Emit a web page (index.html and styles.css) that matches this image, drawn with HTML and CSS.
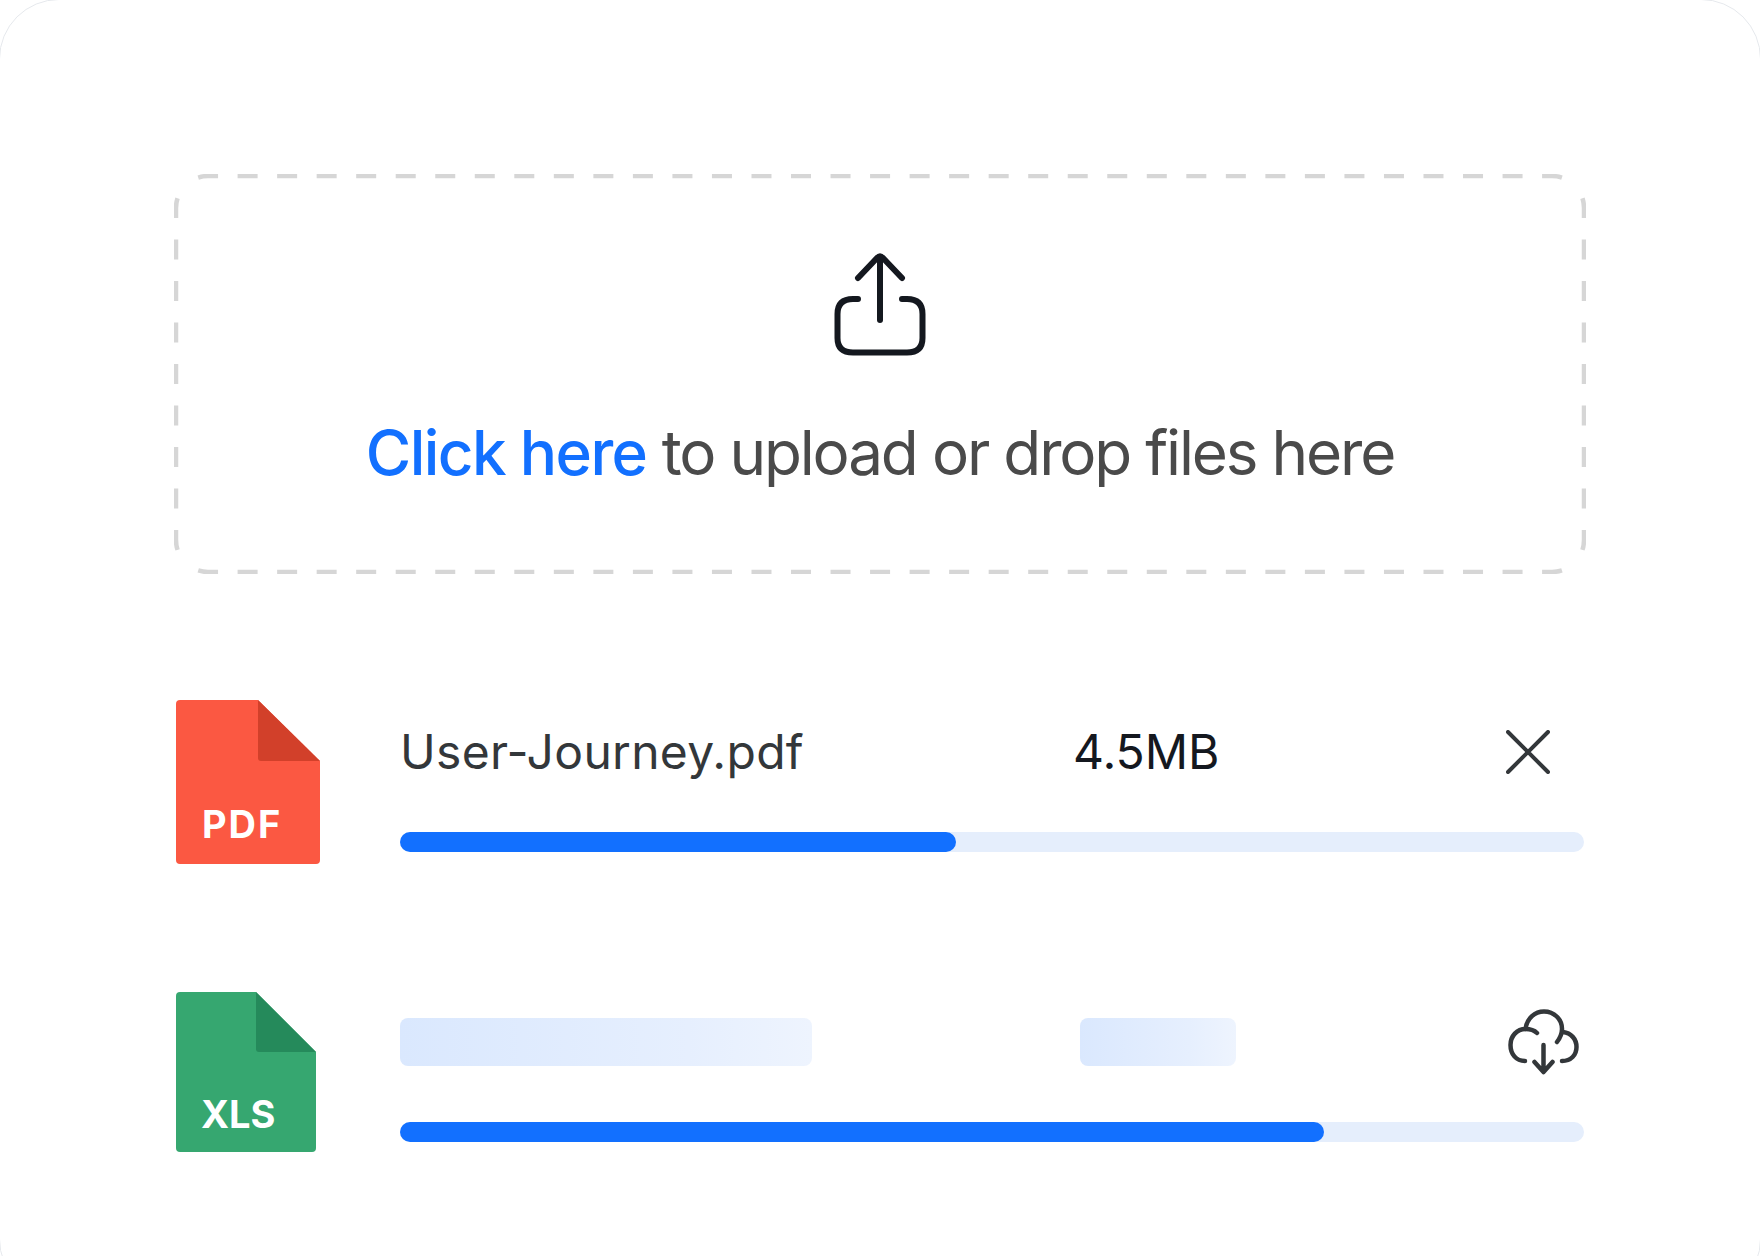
FILE: index.html
```html
<!DOCTYPE html>
<html lang="en">
<head>
    <meta charset="UTF-8">
    <meta name="viewport" content="width=device-width, initial-scale=1.0">
    <title>File Upload</title>
    <link rel="stylesheet" href="styles.css">
</head>
<body>
    <div class="card">
        <div class="dropzone">
            <svg class="dropzone-border" width="1412" height="400" viewBox="0 0 1412 400">
                <path class="dash-h" d="M11.37 11.37A32 32 0 0 1 34 2H1378A32 32 0 0 1 1400.63 11.37"></path>
                <path class="dash-h" d="M11.37 388.63A32 32 0 0 0 34 398H1378A32 32 0 0 0 1400.63 388.63"></path>
                <path class="dash-v" d="M11.37 11.37A32 32 0 0 0 2 34V366A32 32 0 0 0 11.37 388.63"></path>
                <path class="dash-v" d="M1400.63 11.37A32 32 0 0 1 1410 34V366A32 32 0 0 1 1400.63 388.63"></path>
            </svg>
            <svg class="upload-icon" width="92" height="104" viewBox="-1 0 92 104">
                <path d="M23 46h-5q-15.500 0-15.500 15v24q0 14.500 15.500 14.500h54q15.500 0 15.500-14.500V61q0-15-15.500-15h-5"></path>
                <path d="M45 67V4"></path>
                <path d="M23 25 42 5q3-3 6 0l19 20"></path>
            </svg>
            <p class="dropzone-text"><span class="link">Click here</span> to upload or drop files here</p>
        </div>

        <div class="file-row">
            <div class="file-type">
                <svg width="144" height="164" viewBox="0 0 144 164">
                    <path class="pdf-body" d="M4 0H82L144 61V160a4 4 0 0 1-4 4H4a4 4 0 0 1-4-4V4a4 4 0 0 1 4-4Z"></path>
                    <path class="pdf-fold" d="M82 0 144 61H85a3 3 0 0 1-3-3Z"></path>
                    <text class="file-label" x="26" y="138">PDF</text>
                </svg>
            </div>
            <div class="file-main">
                <div class="file-top">
                    <span class="file-name">User-Journey.pdf</span>
                    <span class="file-size">4.5MB</span>
                    <svg class="close-icon" width="44" height="44" viewBox="0 0 44 44">
                        <path d="M2 2 42 42M42 2 2 42"></path>
                    </svg>
                </div>
                <div class="progress"><div class="progress-fill" style="width: 47%"></div></div>
            </div>
        </div>

        <div class="file-row file-row-xls">
            <div class="file-type">
                <svg width="140" height="160" viewBox="0 0 140 160">
                    <path class="xls-body" d="M4 0H80L140 60V156a4 4 0 0 1-4 4H4a4 4 0 0 1-4-4V4a4 4 0 0 1 4-4Z"></path>
                    <path class="xls-fold" d="M80 0 140 60H83a3 3 0 0 1-3-3Z"></path>
                    <text class="file-label file-label-xls" x="25" y="135.500">XLS</text>
                </svg>
            </div>
            <div class="file-main">
                <div class="file-top file-top-loading">
                    <div class="skeleton skeleton-name"></div>
                    <div class="skeleton skeleton-size"></div>
                    <svg class="cloud-icon" width="72" height="66" viewBox="0 0 72 66">
                        <path d="M18 52C9 52 3.500 45 3.500 36 3.500 27 10 20 18.500 20 23 20 27 21 30 24"></path>
                        <path d="M18.500 20C20 9 28 2.500 37 2.500 47 2.500 55 10 55 20 55 25 53 29 50 33"></path>
                        <path d="M56 23C64 24 69.500 30 69.500 38 69.500 46 64 52 55 52"></path>
                        <path d="M36.500 36V62M27.500 53l9 10 9-10"></path>
                    </svg>
                </div>
                <div class="progress"><div class="progress-fill" style="width: 78%"></div></div>
            </div>
        </div>
    </div>
</body>
</html>
```

FILE: styles.css
```css
html, body {
    margin: 0;
    height: 100%;
    overflow: hidden;
    background-color: #fff;
}

body {
    font-family: Inter, "Liberation Sans", sans-serif;
}

/* straight edges of the card sit just off the page, only the corners show */
.card {
    box-sizing: border-box;
    width: 1762px;
    height: 1300px;
    margin: -1px 0 0 -1px;
    padding: 174px 174px 0 174px;
    background-color: #fff;
    border: 1px solid #e6e9ed;
    border-radius: 60px;
}

.dropzone {
    position: relative;
    box-sizing: border-box;
    height: 400px;
    padding-top: 79px;
    display: flex;
    flex-direction: column;
    align-items: center;
}

.dropzone-border {
    position: absolute;
    top: 0;
    left: 0;
}

.dropzone-border path {
    fill: none;
    stroke: #d6d6d6;
    stroke-width: 4.5;
    stroke-dashoffset: -15.1;
}

.dash-h {
    stroke-dasharray: 20 19.53;
}

.dash-v {
    stroke-dasharray: 20 21.5;
}

.upload-icon {
    fill: none;
    stroke: #14181f;
    stroke-width: 6;
    stroke-linecap: round;
    stroke-linejoin: round;
}

.dropzone-text {
    margin: 60px 0 0;
    font-size: 62px;
    line-height: 72px;
    letter-spacing: -2.17px;
    color: #4a4a4a;
}

.link {
    font-weight: 500;
    letter-spacing: -1.6px;
    color: #1270ff;
}

.file-row {
    display: flex;
    margin: 126px 2px 0 2px;
    height: 164px;
}

.file-row-xls {
    margin-top: 128px;
    height: 160px;
}

.file-type {
    flex: 0 0 224px;
}

.file-type svg {
    display: block;
}

.pdf-body { fill: #fb5842; }
.pdf-fold { fill: #d2402a; }
.xls-body { fill: #36a770; }
.xls-fold { fill: #258a5b; }

.file-label {
    font-size: 38px;
    font-weight: 700;
    letter-spacing: 2px;
    fill: #fff;
}

.file-label-xls {
    letter-spacing: 0;
}

.file-main {
    flex: 1;
    display: flex;
    flex-direction: column;
    justify-content: flex-end;
    padding-bottom: 12px;
}

.file-row-xls .file-main {
    padding-bottom: 10px;
}

.file-top {
    display: flex;
    align-items: center;
    height: 44px;
    margin-bottom: 58px;
    padding-right: 34px;
}

.file-top-loading {
    height: 48px;
    margin-bottom: 56px;
    padding-right: 5px;
}

.file-name {
    width: 673px;
    margin-bottom: 2px;
    font-size: 48px;
    letter-spacing: 0.3px;
    color: #33373a;
}

.file-size {
    flex: 1;
    margin-bottom: 2px;
    font-size: 48px;
    color: #14181f;
}

.close-icon {
    fill: none;
    stroke: #33373a;
    stroke-width: 4;
    stroke-linecap: round;
}

.skeleton {
    height: 48px;
    border-radius: 8px;
    background: linear-gradient(90deg, #dae8fe 0%, #e6effe 70%, #eef4fe 100%);
}

.skeleton-name {
    width: 412px;
    margin-right: 268px;
}

.skeleton-size {
    width: 156px;
    margin-right: auto;
}

.cloud-icon {
    flex: none;
    margin: -9px 0;
    fill: none;
    stroke: #33373a;
    stroke-width: 4.5;
    stroke-linecap: round;
    stroke-linejoin: round;
}

.progress {
    height: 20px;
    border-radius: 10px;
    background-color: #e5eefc;
}

.progress-fill {
    height: 100%;
    border-radius: 10px;
    background-color: #1270ff;
}
```
